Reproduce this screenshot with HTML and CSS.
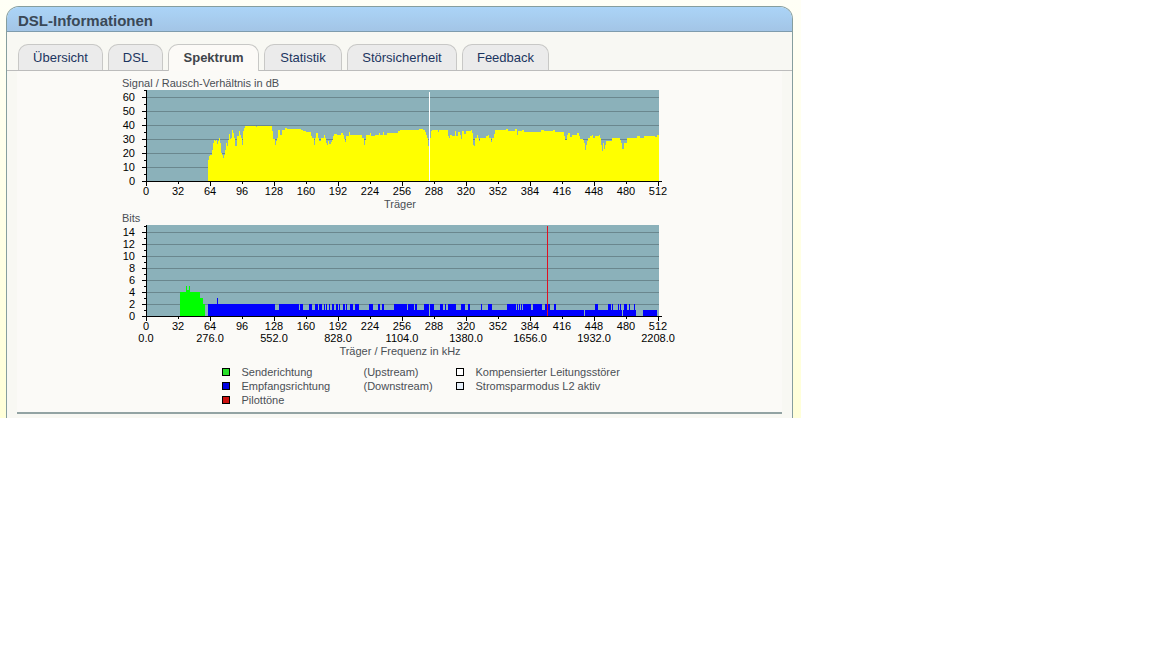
FILE: index.html
```
<!DOCTYPE html>
<html lang="de">
<head>
  <meta charset="utf-8">
  <title>DSL-Informationen</title>
  <link rel="stylesheet" href="styles.css">
</head>
<body>
  <div class="page">
    <div class="box">
      <h1>DSL-Informationen</h1>
      <nav class="tabs">
        <a href="#uebersicht">Übersicht</a>
        <a href="#dsl">DSL</a>
        <a href="#spektrum" class="active">Spektrum</a>
        <a href="#statistik">Statistik</a>
        <a href="#stoersicherheit">Störsicherheit</a>
        <a href="#feedback">Feedback</a>
      </nav>
      <div class="content">
        <svg id="snr" class="chart" width="563" height="134"></svg>
        <svg id="bits" class="chart" width="563" height="150"></svg>
        <div class="legend">
          <span class="key up"></span><span>Senderichtung</span><span>(Upstream)</span>
          <span class="key noise"></span><span>Kompensierter Leitungsstörer</span>
          <span class="key down"></span><span>Empfangsrichtung</span><span>(Downstream)</span>
          <span class="key l2"></span><span>Stromsparmodus L2 aktiv</span>
          <span class="key pilot"></span><span>Pilottöne</span>
        </div>
      </div>
    </div>
  </div>
  <script src="spectrum.js"></script>
</body>
</html>
```

FILE: styles.css
```
body {
  margin: 0;
  background-color: white;
  font-family: Arial, "Liberation Sans", sans-serif;
  font-size: 11px;
  color: #4a4f55;
}
.page {
  box-sizing: border-box;
  max-width: 801px;
  padding: 6px 8px 0 6px;
  background: linear-gradient(#fffff6, #ffffd8);
}
.box {
  padding-bottom: 4px;
  border: 1px solid #869e9e;
  border-bottom: none;
  border-radius: 13px 13px 0 0;
  background-color: #f8f8f3;
  overflow: hidden;
}
h1 {
  margin: 0;
  padding: 0 11px;
  font-size: 15px;
  line-height: 27px;
  height: 24px;
  color: #3a4856;
  background: linear-gradient(#abd4f7, #a3c5e6);
  border-bottom: 1px solid #7f9cad;
}
.tabs {
  display: grid;
  grid-template-columns: 85px 55px 91px 78px 110px 87px;
  gap: 5px;
  padding: 12px 11px 0;
  border-bottom: 1px solid #bcbcbc;
}
.tabs a {
  border: 1px solid #c8c8c6;
  border-bottom: none;
  border-radius: 10px 10px 0 0;
  background-color: #ebebeb;
  color: #1b3560;
  font-size: 13px;
  line-height: 26px;
  height: 25px;
  text-align: center;
  text-decoration: none;
}
.tabs a.active {
  margin-bottom: -1px;
  height: 26px;
  background-color: #fcfaf7;
  color: #3f444a;
  font-weight: bold;
}
.content {
  margin: 0 10px;
  padding-top: 5px;
  background-color: #fbfaf7;
  border-bottom: 2px solid #92a3a3;
}
.chart {
  display: block;
  margin: 0 auto;
  font-size: 11px;
}
.legend {
  display: grid;
  grid-template-columns: 20px 122px 92px 20px 160px;
  width: 414px;
  margin: 0 auto;
  padding: 5px 0 5px 58px;
  line-height: 14px;
}
.key {
  box-sizing: border-box;
  width: 8px;
  height: 8px;
  margin-top: 3px;
  border: 1px solid black;
}
.up { background-color: #28e028; }
.down { background-color: #0000e0; }
.pilot { background-color: #cc1111; }
.noise { background-color: white; }
.l2 { background-color: #e4eef8; }
```

FILE: spectrum.js
```
// [carrier, height] steps, each one holds until the next
var snr = [[62,21],[63,25],[64,26],[66,31],[67,38],[68,41],[69,40],[70,41],[71,37],[72,40],[73,43],[74,38],[75,28],[76,26],[77,23],[78,26],[79,31],[80,38],[81,35],[82,41],[83,47],[84,42],[85,43],[86,51],[87,48],[88,43],[89,35],[91,45],[93,50],[94,46],[95,43],[96,36],[97,50],[98,53],[99,55],[110,54],[111,55],[126,50],[127,42],[129,36],[130,40],[131,43],[132,51],[134,46],[136,51],[139,53],[141,52],[155,51],[157,50],[160,49],[165,45],[166,43],[168,36],[169,43],[170,48],[172,43],[173,40],[175,43],[178,46],[179,43],[180,38],[181,36],[182,40],[183,37],[185,39],[186,41],[187,45],[188,47],[191,46],[195,48],[197,46],[198,42],[199,39],[200,45],[203,49],[204,46],[216,43],[218,36],[219,41],[220,46],[224,48],[225,45],[229,46],[233,48],[234,46],[237,49],[238,46],[241,48],[252,50],[254,51],[273,52],[277,51],[279,49],[280,46],[281,43],[282,35],[284,43],[285,50],[286,51],[292,49],[293,51],[302,45],[303,43],[304,46],[306,45],[309,50],[310,45],[312,49],[314,46],[315,42],[316,50],[318,47],[320,50],[325,51],[326,48],[327,36],[328,35],[329,43],[331,46],[332,43],[333,40],[334,43],[340,45],[342,46],[343,43],[345,39],[346,43],[348,47],[349,51],[360,52],[362,50],[369,52],[371,46],[372,50],[376,51],[378,49],[395,51],[398,50],[407,51],[409,49],[418,45],[419,41],[421,46],[422,48],[424,44],[426,46],[431,48],[433,45],[434,42],[437,41],[438,38],[439,31],[440,36],[441,40],[442,43],[444,45],[446,46],[447,43],[449,45],[453,46],[454,43],[455,36],[456,30],[457,38],[458,32],[459,36],[460,40],[466,43],[474,41],[475,38],[476,32],[478,38],[481,43],[491,45],[494,43],[498,45],[509,44],[511,46],[513,0]];
var up = [[34,24],[40,30],[41,26],[43,30],[44,24],[54,18],[57,12],[59,0]];
// carriers that hold two bits
var two = [[62,129],[133,153],[154,157],[163,166],[169,172],[173,176],[178,179],[180,181],[183,184],[186,188],[190,192],[193,194],[197,199],[200,201],[204,207],[209,213],[223,227],[232,234],[236,238],[248,261],[262,268],[269,271],[278,283],[284,288],[294,297],[299,300],[302,310],[315,319],[322,324],[335,336],[342,346],[361,370],[371,372],[373,374],[375,376],[377,385],[387,396],[399,404],[408,410],[449,452],[462,465],[466,467],[472,473],[474,475],[478,481],[483,484],[488,489]];

var X0 = 28;
function rect(x, y, w, h, fill) {
  return '<rect x="' + x + '" y="' + y + '" width="' + w + '" height="' + h + '" fill="' + fill + '"/>';
}
function text(x, y, s, anchor, fill) {
  return '<text x="' + x + '" y="' + y + '" text-anchor="' + anchor + '" fill="' + fill + '">' + s + '</text>';
}
function steps(list, base, fill) {
  var out = "";
  for (var i = 0; i < list.length - 1; i++) {
    out += rect(X0 + list[i][0], base - list[i][1], list[i + 1][0] - list[i][0], list[i][1], fill);
  }
  return out;
}
function frame(top, unit, step, max) {
  var base = top + 91;
  var out = rect(X0 + 1, top, 512, 91, "#8bb1ba");
  for (var v = step; v <= max; v += step) {
    out += rect(X0 + 1, base - v * unit, 512, 1, "#6a878e");
  }
  return out;
}
function axes(top, unit, step, max) {
  var base = top + 91;
  var out = rect(X0, top, 1, 92, "black") + rect(X0, base, 516, 1, "black");
  for (var v = 0; v <= max; v += step) {
    out += rect(X0 - 4, base - v * unit, 4, 1, "black");
    out += rect(X0 - 2, Math.round(base - (v + step / 2) * unit), 2, 1, "black");
    out += text(X0 - 11, base + 4 - v * unit, v, "end", "black");
  }
  for (var c = 0; c <= 512; c += 32) {
    out += rect(X0 + c, base, 1, c % 64 ? 3 : 5, "black");
    out += text(X0 + c, base + 14, c, "middle", "black");
  }
  return out;
}

var base = 106;
document.getElementById("snr").innerHTML =
  text(4, 11, "Signal / Rausch-Verhältnis in dB", "start", "#4a4f55") +
  '<g shape-rendering="crispEdges">' +
  frame(14, 1.4, 10, 60) + steps(snr, 105, "#ffff00") +
  rect(X0 + 283, 16, 1, 89, "white") + axes(14, 1.4, 10, 60) + '</g>' +
  text(282, 132, "Träger", "middle", "#4a4f55");

var b = frame(15, 6, 2, 14) + steps(up, base, "#00ff00");
b += rect(X0 + 62, base - 6, 428, 6, "#0000ff") + rect(X0 + 497, base - 6, 14, 6, "#0000ff");
for (var i = 0; i < two.length; i++) {
  b += rect(X0 + two[i][0], base - 12, two[i][1] - two[i][0], 12, "#0000ff");
}
b += rect(X0 + 71, base - 18, 1, 18, "#0000ff");
b += rect(X0 + 283, base - 6, 1, 6, "#8bb1ba") + rect(X0 + 438, base - 6, 1, 6, "#8bb1ba") + rect(X0 + 476, base - 6, 1, 6, "#8bb1ba");
b += rect(X0 + 401, 16, 1, 90, "#e01020");
b += axes(15, 6, 2, 14);
for (var k = 0; k <= 8; k++) {
  b += text(X0 + k * 64, 132, (k * 276).toFixed(1), "middle", "black");
}
document.getElementById("bits").innerHTML =
  text(4, 12, "Bits", "start", "#4a4f55") +
  '<g shape-rendering="crispEdges">' + b + '</g>' +
  text(282, 145, "Träger / Frequenz in kHz", "middle", "#4a4f55");
```
